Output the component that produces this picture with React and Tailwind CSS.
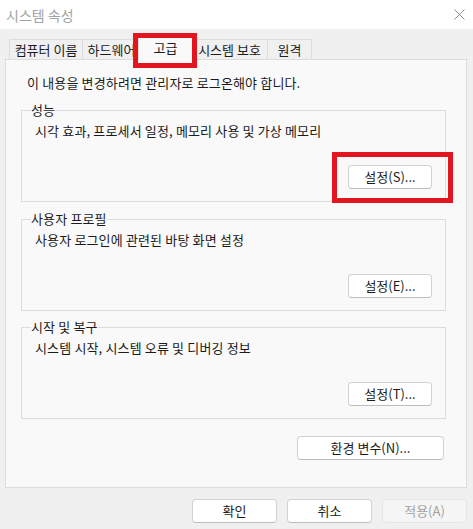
import React from "react";

const tabs = [
  { label: "컴퓨터 이름", w: "w-[73px]" },
  { label: "하드웨어", w: "w-[58px]" },
  { label: "고급", w: "w-[55px]", active: true },
  { label: "시스템 보호", w: "w-[76px]" },
  { label: "원격", w: "w-[45px]" },
];

const groups = [
  {
    title: "성능",
    desc: "시각 효과, 프로세서 일정, 메모리 사용 및 가상 메모리",
    button: "설정(S)...",
    mark: true,
    gap: "mt-[11px]",
  },
  {
    title: "사용자 프로필",
    desc: "사용자 로그인에 관련된 바탕 화면 설정",
    button: "설정(E)...",
    gap: "mt-[9px]",
  },
  {
    title: "시작 및 복구",
    desc: "시스템 시작, 시스템 오류 및 디버깅 정보",
    button: "설정(T)...",
    gap: "mt-[8px]",
  },
];

const WinButton = ({ children, className = "", disabled }) => (
  <button
    disabled={disabled}
    className={`h-[24px] rounded-[4px] border text-[13px] leading-[16px] ${
      disabled
        ? "border-[#e6e6e6] bg-[#f5f5f5] text-[#a2a2a2]"
        : "border-[#d2d2d2] border-b-[#bdbdbd] bg-white text-[#1b1b1b]"
    } ${className}`}
  >
    {children}
  </button>
);

const GroupBox = ({ title, desc, button, mark, gap }) => (
  <fieldset
    className={`${gap} w-[425px] border border-[#dcdcdc] pl-[9px] pr-[13px] pb-[12px]`}
  >
    <legend className="px-0 text-[13px] leading-[16px] tracking-[0.15px] text-[#1b1b1b]">
      {title}
    </legend>
    <p className="ml-[4px] mt-[5px] text-[13px] leading-[16px] tracking-[0.15px] text-[#1b1b1b]">
      {desc}
    </p>
    <div className="mt-[24px] flex justify-end">
      <div className="relative">
        <WinButton className="w-[84px]">{button}</WinButton>
        {mark && (
          <span className="pointer-events-none absolute left-[-16px] top-[-11px] h-[51px] w-[121px] border-[5px] border-[#e3161f]" />
        )}
      </div>
    </div>
  </fieldset>
);

export default function App() {
  return (
    <div className="w-[473px] h-[529px] overflow-hidden bg-[#f0f0f0] font-['Noto_Sans_CJK_KR','Noto_Sans',sans-serif]">
      {/* Title bar */}
      <div className="flex h-[29px] items-center justify-between bg-white pl-[6px] pr-[8px]">
        <span className="text-[14px] leading-[16px] text-[#a3a3a3]">
          시스템 속성
        </span>
        <svg width="11" height="11" viewBox="0 0 11 11">
          <path d="M0.5 0.5L10.5 10.5M10.5 0.5L0.5 10.5" stroke="#8c8c8c" strokeWidth="1" />
        </svg>
      </div>

      <div className="pl-[5px] pr-[6px]">
        {/* Tabs */}
        <div className="relative z-10 flex h-[30px] items-end pl-[4px]">
          {tabs.map((t) =>
            t.active ? (
              <div
                key={t.label}
                className={`relative -mx-[2px] -mb-px flex h-[24px] ${t.w} items-center justify-center border border-b-0 border-[#dcdcdc] bg-[#f9f9f9] pb-[2px] text-[13px] text-[#1b1b1b]`}
              >
                {t.label}
                <span className="pointer-events-none absolute left-[-6px] top-[-4px] h-[35px] w-[64px] border-[5px] border-[#e3161f]" />
              </div>
            ) : (
              <div
                key={t.label}
                className={`flex h-[20px] ${t.w} items-center justify-center border border-b-0 border-r-0 border-[#dcdcdc] bg-[#f0f0f0] text-[13px] text-[#1b1b1b] last:border-r`}
              >
                {t.label}
              </div>
            )
          )}
        </div>

        {/* Panel */}
        <div className="h-[429px] border border-[#dcdcdc] bg-[#f9f9f9] pl-[15px] pt-[15px]">
          <p className="ml-[6px] text-[13px] leading-[16px] tracking-[0.15px] text-[#1b1b1b]">
            이 내용을 변경하려면 관리자로 로그온해야 합니다.
          </p>
          {groups.map((g) => (
            <GroupBox key={g.title} {...g} />
          ))}
          <div className="mt-[17px] flex w-[425px] justify-end pr-[2px]">
            <WinButton className="w-[147px]">환경 변수(N)...</WinButton>
          </div>
        </div>

        {/* Dialog buttons */}
        <div className="mt-[11px] flex justify-end gap-[10px]">
          <WinButton className="w-[85px]">확인</WinButton>
          <WinButton className="w-[85px]">취소</WinButton>
          <WinButton className="w-[85px]" disabled>
            적용(A)
          </WinButton>
        </div>
      </div>
    </div>
  );
}
